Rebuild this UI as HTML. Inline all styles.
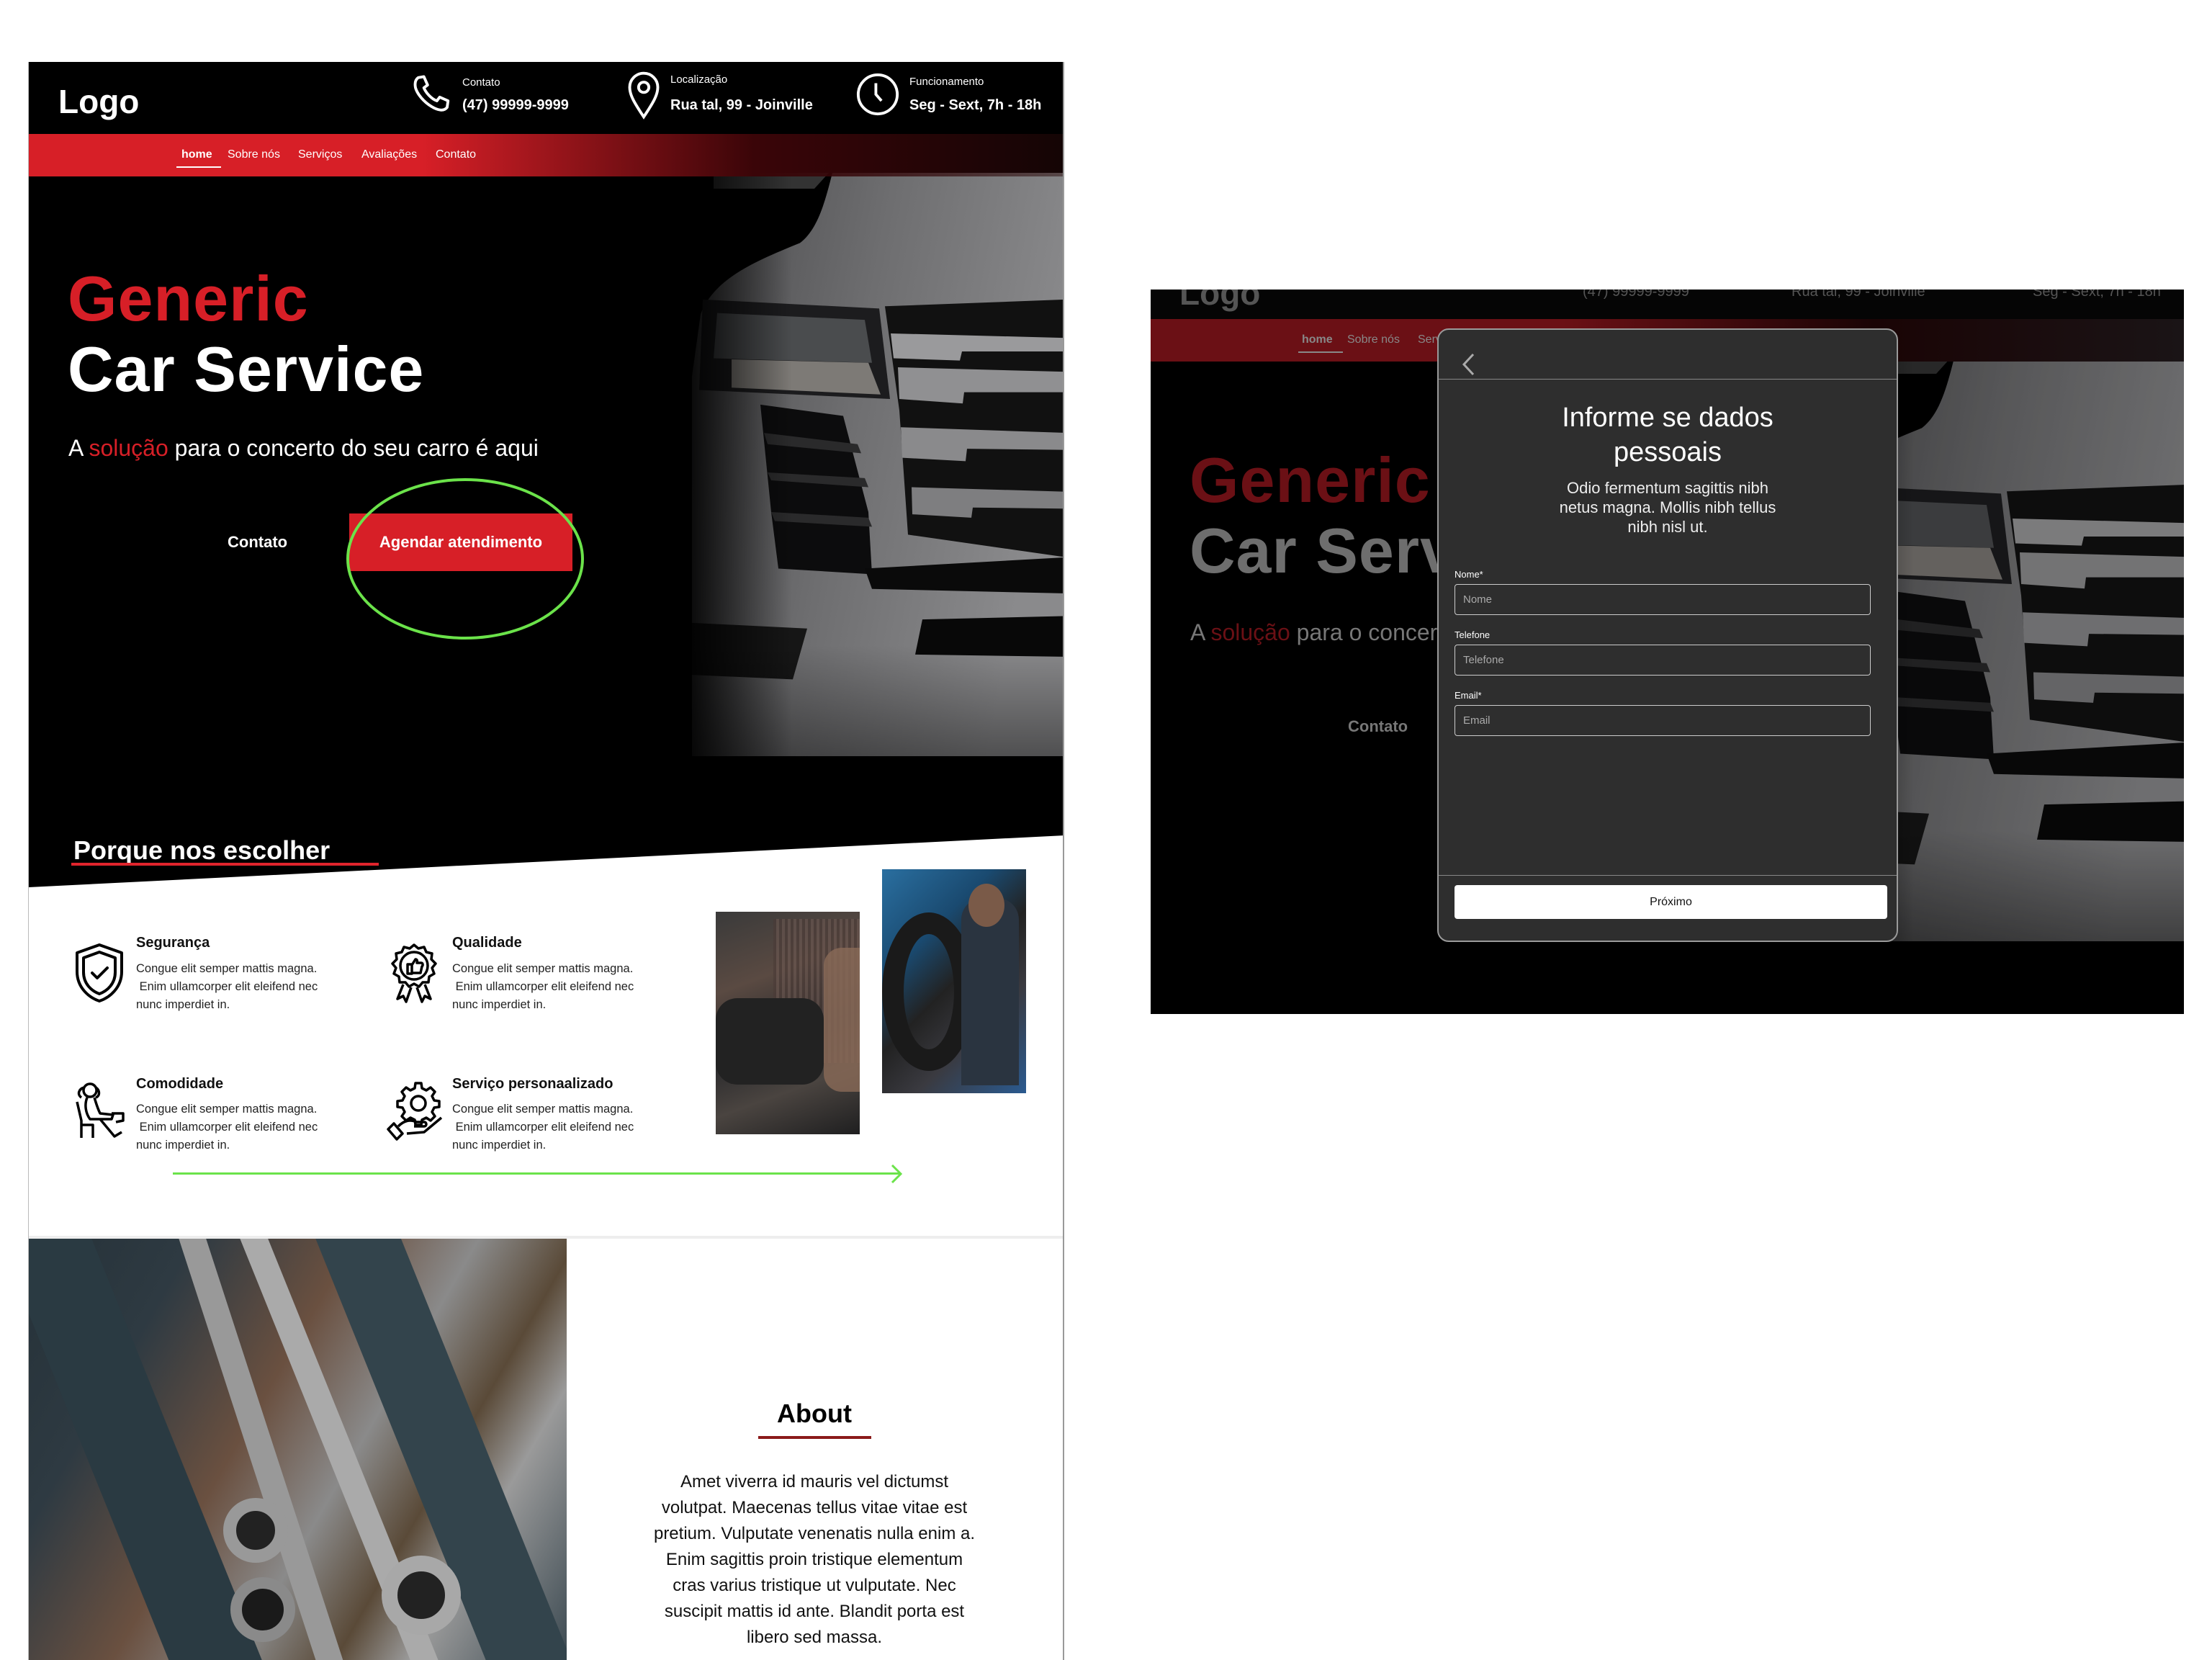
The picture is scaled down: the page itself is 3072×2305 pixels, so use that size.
<!DOCTYPE html>
<html><head><meta charset="utf-8">
<style>
*{margin:0;padding:0;box-sizing:border-box}
html,body{width:3072px;height:2305px;overflow:hidden}
body{background:#fff;position:relative;font-family:"Liberation Sans",sans-serif}
.a{position:absolute;white-space:nowrap}
.w{color:#fff}
.feat-t{font-size:20px;font-weight:bold;color:#111}
.feat-p{font-size:16.5px;line-height:25px;color:#222}
</style></head><body>

<svg width="0" height="0" style="position:absolute">
  <defs>
    <linearGradient id="cb" x1="0" y1="0" x2="1" y2="0.3">
      <stop offset="0" stop-color="#4a4a4c"/><stop offset="0.5" stop-color="#6e6e70"/><stop offset="1" stop-color="#8a8a8c"/>
    </linearGradient>
    <linearGradient id="fade" x1="0" y1="0" x2="0" y2="1">
      <stop offset="0.8" stop-color="#000" stop-opacity="0"/><stop offset="1" stop-color="#000" stop-opacity="0.45"/>
    </linearGradient>
    <g id="car">
      <g transform="scale(1,1.57)">
        <path d="M520,0 L195,0 C185,25 175,50 150,62 C80,80 30,95 12,125 L0,180 L0,520 L520,520 Z" fill="url(#cb)"/>
        <path d="M30,0 L190,0 L170,14 L30,14Z" fill="#333"/>
        <path d="M15,112 L260,120 L275,200 L10,192 Z" fill="#1c1c1e"/>
        <path d="M35,124 L240,130 L250,168 L30,164Z" fill="#4a4c4e"/>
        <path d="M55,165 L245,168 L262,196 L55,190Z" fill="#7d7a76"/>
        <path d="M268,118 L520,112 L520,340 L300,320 L288,210 Z" fill="#111"/>
        <path d="M276,142 L520,146 L520,158 L375,158 L372,166 L280,164Z" fill="#9a9a9c"/>
        <path d="M286,172 L520,176 L520,194 L378,194 L376,204 L288,200Z" fill="#909092"/>
        <path d="M290,225 L520,230 L520,245 L382,244 L380,255 L292,252Z" fill="#8a8a8c"/>
        <path d="M305,278 L520,282 L520,297 L390,296 L388,305 L306,302Z" fill="#7e7e80"/>
        <path d="M95,205 L210,215 L245,300 L250,355 L120,350 L110,300Z" fill="#0c0c0d"/>
        <path d="M100,230 L230,240 L235,248 L105,240Z M105,265 L240,270 L245,278 L110,272Z M110,300 L245,305 L250,313 L115,308Z" fill="#2a2a2b"/>
        <path d="M240,350 L520,340 L520,372 L250,368Z" fill="#0a0a0a"/>
        <path d="M320,395 L520,392 L520,428 L310,426Z" fill="#080808"/>
        <path d="M0,398 L160,403 L140,448 L0,444Z" fill="#161616"/>
      </g>
      <rect x="0" y="0" width="520" height="820" fill="url(#fade)"/>
    </g>
  </defs>
</svg>

<!-- MAIN PAGE FRAME -->
<div class="a" style="left:39px;top:86px;width:1439px;height:2219px;background:#fff;border-right:2px solid #999;border-left:1px solid #bbb;overflow:hidden">
  <div class="a" style="left:0;top:0;width:1439px;height:1160px;background:#000"></div>
  <svg class="a" style="left:921px;top:154px" width="520" height="810" viewBox="0 0 520 810"><use href="#car"/></svg>
  <div class="a" style="left:900px;top:150px;width:160px;height:830px;background:linear-gradient(90deg,#000,rgba(0,0,0,0))"></div>
  <!-- header -->
  <div class="a" style="left:0;top:0;width:1439px;height:100px;background:rgba(0,0,0,0.92)"></div>
  <div class="a w" style="left:41px;top:28px;font-size:46px;font-weight:bold">Logo</div>
  <svg class="a" style="left:528px;top:14px" width="62" height="62" viewBox="0 0 24 24" fill="none" stroke="#fff" stroke-width="1.5" stroke-linejoin="round"><path d="M5 3 L8 2.5 L10 7 L8 8.5 C9 11 12 14.5 15 15.5 L16.5 13.5 L21 15.5 L20.5 19 C19 21 16 21 12 18.5 C8 16 4.5 12 3.5 8.5 C3 6 3.5 4 5 3Z"/></svg>
  <div class="a w" style="left:602px;top:20px;font-size:15px">Contato</div>
  <div class="a w" style="left:602px;top:49px;font-size:20px;font-weight:bold">(47) 99999-9999</div>
  <svg class="a" style="left:828px;top:10px" width="52" height="72" viewBox="0 0 24 32" fill="none" stroke="#fff" stroke-width="1.8"><path d="M12 30 C6 21 3 16 3 11 A9 9 0 0 1 21 11 C21 16 18 21 12 30Z"/><circle cx="12" cy="11" r="3.3"/></svg>
  <div class="a w" style="left:891px;top:16px;font-size:15px">Localização</div>
  <div class="a w" style="left:891px;top:49px;font-size:20px;font-weight:bold">Rua tal, 99 - Joinville</div>
  <svg class="a" style="left:1148px;top:14px" width="62" height="62" viewBox="0 0 24 24" fill="none" stroke="#fff" stroke-width="1.5"><circle cx="12" cy="12" r="10.5"/><path d="M11 6 L11 12 L14 15.5"/></svg>
  <div class="a w" style="left:1223px;top:19px;font-size:15px">Funcionamento</div>
  <div class="a w" style="left:1223px;top:49px;font-size:20px;font-weight:bold">Seg - Sext, 7h - 18h</div>
  <!-- nav -->
  <div class="a" style="left:0;top:100px;width:1439px;height:59px;background:linear-gradient(90deg,#d71f27 0%,#d71f27 38%,#3a0508 70%,rgba(40,10,10,0.5) 100%)"></div>
  <div class="a w" style="left:212px;top:120px;font-size:16px;font-weight:bold">home</div>
  <div class="a" style="left:205px;top:145px;width:62px;height:2px;background:#fff"></div>
  <div class="a w" style="left:276px;top:120px;font-size:16px">Sobre nós</div>
  <div class="a w" style="left:374px;top:120px;font-size:16px">Serviços</div>
  <div class="a w" style="left:462px;top:120px;font-size:16px">Avaliações</div>
  <div class="a w" style="left:565px;top:120px;font-size:16px">Contato</div>
  <!-- hero text -->
  <div class="a" style="left:54px;top:278px;font-size:88px;font-weight:bold;color:#d71f27;letter-spacing:1px">Generic</div>
  <div class="a w" style="left:54px;top:376px;font-size:88px;font-weight:bold;letter-spacing:1px">Car Service</div>
  <div class="a w" style="left:55px;top:518px;font-size:32px">A <span style="color:#d71f27">solução</span> para o concerto do seu carro é aqui</div>
  <div class="a w" style="left:276px;top:654px;font-size:22px;font-weight:bold">Contato</div>
  <div class="a" style="left:445px;top:627px;width:310px;height:80px;background:#d71f27"></div>
  <div class="a w" style="left:445px;top:654px;width:310px;text-align:center;font-size:22px;font-weight:bold">Agendar atendimento</div>
  <div class="a" style="left:441px;top:578px;width:330px;height:224px;border:4px solid #6be34a;border-radius:50%"></div>
  <!-- slant -->
  <svg class="a" style="left:0;top:1060px" width="1439" height="100" viewBox="0 0 1439 100"><path d="M0,86 L1439,14 L1439,100 L0,100Z" fill="#fff"/></svg>
  <div class="a w" style="left:62px;top:1074px;font-size:36px;font-weight:bold">Porque nos escolher</div>
  <div class="a" style="left:59px;top:1112px;width:427px;height:4px;background:#e0242c"></div>
  <div class="a" style="left:0;top:1160px;width:1439px;height:475px;background:#fff"></div>
  <!-- features -->
  <svg class="a" style="left:63px;top:1223px" width="70" height="84" viewBox="0 0 70 84" fill="none" stroke="#000" stroke-width="4" stroke-linecap="round" stroke-linejoin="round"><path d="M35 3 L66 14 L66 40 C66 62 50 76 35 81 C20 76 4 62 4 40 L4 14Z"/><path d="M35 13 L57 21 L57 41 C57 57 46 67 35 71 C24 67 13 57 13 41 L13 21Z"/><path d="M25 42 L32 49 L46 35"/></svg>
  <div class="a feat-t" style="left:149px;top:1212px">Segurança</div>
  <div class="a feat-p" style="left:149px;top:1247px">Congue elit semper mattis magna.<br>&nbsp;Enim ullamcorper elit eleifend nec<br>nunc imperdiet in.</div>
  <svg class="a" style="left:500px;top:1223px" width="70" height="86" viewBox="0 0 70 86" fill="none" stroke="#000" stroke-width="3.5" stroke-linejoin="round"><path d="M35 3 L41 8 L49 6 L52 13 L60 15 L59 23 L65 29 L60 35 L63 43 L56 47 L55 55 L47 55 L42 61 L35 57 L28 61 L23 55 L15 55 L14 47 L7 43 L10 35 L5 29 L11 23 L10 15 L18 13 L21 6 L29 8Z"/><circle cx="35" cy="32" r="19"/><path d="M26 30 h6 v13 h-6z M32 31 l5 -8 c2 0 3 2 2 5 h6 c2 0 3 3 1 5 l-2 9 h-12"/><path d="M20 58 L12 78 L20 74 L24 82 L31 62 M50 58 L58 78 L50 74 L46 82 L39 62"/></svg>
  <div class="a feat-t" style="left:588px;top:1212px">Qualidade</div>
  <div class="a feat-p" style="left:588px;top:1247px">Congue elit semper mattis magna.<br>&nbsp;Enim ullamcorper elit eleifend nec<br>nunc imperdiet in.</div>
  <svg class="a" style="left:59px;top:1414px" width="80" height="86" viewBox="0 0 80 86" fill="none" stroke="#000" stroke-width="3.5" stroke-linejoin="round"><circle cx="26" cy="14" r="9"/><path d="M18 10 C10 12 8 20 14 24 M34 10 C40 14 40 22 34 24"/><path d="M22 24 C18 34 20 46 26 54 L56 54 L58 48 L40 46 C36 38 34 30 32 24"/><path d="M8 30 L14 56 L14 80 M14 62 L30 62 L30 80"/><path d="M40 54 L60 78 L70 72 M56 46 L72 46 L72 56 L62 58"/></svg>
  <div class="a feat-t" style="left:149px;top:1408px">Comodidade</div>
  <div class="a feat-p" style="left:149px;top:1442px">Congue elit semper mattis magna.<br>&nbsp;Enim ullamcorper elit eleifend nec<br>nunc imperdiet in.</div>
  <svg class="a" style="left:495px;top:1416px" width="82" height="82" viewBox="0 0 82 82" fill="none" stroke="#000" stroke-width="3.5" stroke-linejoin="round"><path d="M42 2 h8 l1 7 l6 3 l6 -4 l6 6 l-4 6 l3 6 l7 1 v8 l-7 1 l-3 6 l4 6 l-6 6 l-6 -4 l-6 3 l-1 7 h-8 l-1 -7 l-6 -3 l-6 4 l-6 -6 l4 -6 l-3 -6 l-7 -1 v-8 l7 -1 l3 -6 l-4 -6 l6 -6 l6 4 l6 -3z"/><circle cx="46" cy="30" r="10"/><path d="M4 66 L16 80 L24 72 L12 58Z"/><path d="M18 62 C26 54 34 52 44 56 L54 56 C58 56 58 62 54 62 L40 62 M30 72 L54 70 L78 50"/></svg>
  <div class="a feat-t" style="left:588px;top:1408px">Serviço personaalizado</div>
  <div class="a feat-p" style="left:588px;top:1442px">Congue elit semper mattis magna.<br>&nbsp;Enim ullamcorper elit eleifend nec<br>nunc imperdiet in.</div>
  <!-- photos -->
  <div class="a" style="left:954px;top:1180px;width:200px;height:309px;overflow:hidden;background:linear-gradient(160deg,#3a3a3a 0%,#5a4a42 30%,#2a2a2c 55%,#4a4440 75%,#1f1f20 100%)">
    <div class="a" style="left:80px;top:10px;width:120px;height:200px;background:repeating-linear-gradient(90deg,#4a3a36 0 4px,#6a5650 4px 8px);opacity:.6"></div>
    <div class="a" style="left:0;top:120px;width:150px;height:120px;background:#222;border-radius:30px"></div>
    <div class="a" style="left:150px;top:50px;width:50px;height:200px;background:#8a6a58;border-radius:25px 0 0 25px;opacity:.8"></div>
  </div>
  <div class="a" style="left:1185px;top:1121px;width:200px;height:311px;overflow:hidden;background:linear-gradient(135deg,#2a6fa0 0%,#1a4a70 30%,#222 50%,#3a3a40 70%,#2a5a90 100%)">
    <div class="a" style="left:0;top:60px;width:130px;height:220px;border-radius:50%;border:30px solid #1a1a1a"></div>
    <div class="a" style="left:110px;top:40px;width:80px;height:260px;background:#2a3440;border-radius:30px 30px 0 0"></div>
    <div class="a" style="left:120px;top:20px;width:50px;height:60px;background:#7a5a48;border-radius:50%"></div>
  </div>
  <!-- green arrow -->
  <div class="a" style="left:200px;top:1542px;width:1010px;height:3px;background:#6be34a"></div>
  <svg class="a" style="left:1196px;top:1530px" width="20" height="28" viewBox="0 0 20 28" fill="none" stroke="#6be34a" stroke-width="3"><path d="M3 2 L15 14 L3 26"/></svg>
  <!-- separator -->
  <div class="a" style="left:0;top:1630px;width:1439px;height:4px;background:#eee"></div>
  <!-- tools photo -->
  <div class="a" style="left:0;top:1634px;width:747px;height:600px;overflow:hidden;background:#2e3a40">
    <div class="a" style="left:-200px;top:0;width:1200px;height:900px;background:linear-gradient(120deg,#1e2a30 0%,#2e3a42 25%,#6a5040 38%,#8a8a8a 48%,#5a4a38 56%,#9a9a9a 62%,#3a4850 75%,#b8c4cc 90%,#e0e6ea 100%)"></div>
    <div class="a" style="left:100px;top:-60px;width:120px;height:800px;background:#2a3a42;transform:rotate(-22deg)"></div>
    <div class="a" style="left:540px;top:-60px;width:110px;height:800px;background:#33444c;transform:rotate(-22deg)"></div>
    <div class="a" style="left:310px;top:-40px;width:36px;height:700px;background:#999;transform:rotate(-18deg)"></div>
    <div class="a" style="left:420px;top:-40px;width:36px;height:700px;background:#aaa;transform:rotate(-22deg)"></div>
    <div class="a" style="left:270px;top:360px;width:90px;height:90px;border:18px solid #999;border-radius:50%;background:#222"></div>
    <div class="a" style="left:490px;top:440px;width:110px;height:110px;border:22px solid #a8a8a8;border-radius:50%;background:#222"></div>
    <div class="a" style="left:280px;top:470px;width:90px;height:90px;border:16px solid #8a8a8a;border-radius:50%;background:#1a1a1a"></div>
  </div>
  <!-- about -->
  <div class="a" style="left:1011px;top:1856px;width:160px;text-align:center;font-size:36px;font-weight:bold;color:#000">About</div>
  <div class="a" style="left:1013px;top:1908px;width:157px;height:4px;background:#8b1a1a"></div>
  <div class="a" style="left:791px;top:1954px;width:600px;text-align:center;font-size:24px;line-height:36px;color:#111">Amet viverra id mauris vel dictumst<br>volutpat. Maecenas tellus vitae vitae est<br>pretium. Vulputate venenatis nulla enim a.<br>Enim sagittis proin tristique elementum<br>cras varius tristique ut vulputate. Nec<br>suscipit mattis id ante. Blandit porta est<br>libero sed massa.</div>
</div>

<!-- MODAL SCREENSHOT -->
<div class="a" style="left:1598px;top:402px;width:1435px;height:1006px;background:#000;overflow:hidden">
  <svg class="a" style="left:921px;top:95px;opacity:.8" width="520" height="810" viewBox="0 0 520 810"><use href="#car"/></svg>
  <div class="a" style="left:900px;top:90px;width:160px;height:830px;background:linear-gradient(90deg,#000,rgba(0,0,0,0))"></div>
  <div class="a" style="left:0;top:0;width:1435px;height:41px;background:#050505"></div>
  <div class="a" style="left:40px;top:-22px;font-size:46px;font-weight:bold;color:#555">Logo</div>
  <div class="a" style="left:600px;top:-8px;font-size:20px;color:#555">(47) 99999-9999</div>
  <div class="a" style="left:890px;top:-8px;font-size:20px;color:#555">Rua tal, 99 - Joinville</div>
  <div class="a" style="left:1225px;top:-8px;font-size:20px;color:#555">Seg - Sext, 7h - 18h</div>
  <div class="a" style="left:0;top:41px;width:1435px;height:59px;background:linear-gradient(90deg,#6b1015 0%,#6b1015 40%,#1a0405 70%,#1a1416 100%)"></div>
  <div class="a" style="left:210px;top:61px;font-size:16px;font-weight:bold;color:#888">home</div>
  <div class="a" style="left:205px;top:86px;width:62px;height:2px;background:#888"></div>
  <div class="a" style="left:273px;top:61px;font-size:16px;color:#888">Sobre nós</div>
  <div class="a" style="left:371px;top:61px;font-size:16px;color:#888">Serviços</div>
  <div class="a" style="left:54px;top:214px;font-size:88px;font-weight:bold;color:#6b1015;letter-spacing:1px">Generic</div>
  <div class="a" style="left:54px;top:312px;font-size:88px;font-weight:bold;color:#6e6e6e;letter-spacing:1px">Car Service</div>
  <div class="a" style="left:55px;top:458px;font-size:32px;color:#777">A <span style="color:#6b1015">solução</span> para o concerto</div>
  <div class="a" style="left:274px;top:594px;font-size:22px;font-weight:bold;color:#777">Contato</div>

  <!-- modal -->
  <div class="a" style="left:398px;top:54px;width:640px;height:852px;background:#2e2e2e;border:2px solid #9a9a9a;border-radius:16px;overflow:hidden">
    <svg class="a" style="left:28px;top:30px" width="26" height="36" viewBox="0 0 26 36" fill="none" stroke="#aaa" stroke-width="3"><path d="M20 4 L7 18 L20 32"/></svg>
    <div class="a" style="left:0;top:68px;width:640px;height:1px;background:#888"></div>
    <div class="a w" style="left:0;top:98px;width:636px;text-align:center;font-size:38px;line-height:48px">Informe se dados<br>pessoais</div>
    <div class="a w" style="left:0;top:206px;width:636px;text-align:center;font-size:22px;line-height:27px;color:#eee">Odio fermentum sagittis nibh<br>netus magna. Mollis nibh tellus<br>nibh nisl ut.</div>
    <div class="a w" style="left:22px;top:332px;font-size:13px">Nome*</div>
    <div class="a" style="left:22px;top:353px;width:578px;height:43px;border:1.5px solid #ccc;border-radius:4px"></div>
    <div class="a" style="left:34px;top:366px;font-size:15px;color:#aaa">Nome</div>
    <div class="a w" style="left:22px;top:416px;font-size:13px">Telefone</div>
    <div class="a" style="left:22px;top:437px;width:578px;height:43px;border:1.5px solid #ccc;border-radius:4px"></div>
    <div class="a" style="left:34px;top:450px;font-size:15px;color:#aaa">Telefone</div>
    <div class="a w" style="left:22px;top:500px;font-size:13px">Email*</div>
    <div class="a" style="left:22px;top:521px;width:578px;height:43px;border:1.5px solid #ccc;border-radius:4px"></div>
    <div class="a" style="left:34px;top:534px;font-size:15px;color:#aaa">Email</div>
    <div class="a" style="left:0;top:757px;width:640px;height:1px;background:#888"></div>
    <div class="a" style="left:22px;top:771px;width:601px;height:47px;background:#fff;border-radius:4px;text-align:center;line-height:47px;font-size:16px;color:#111">Próximo</div>
  </div>
</div>
</body></html>
